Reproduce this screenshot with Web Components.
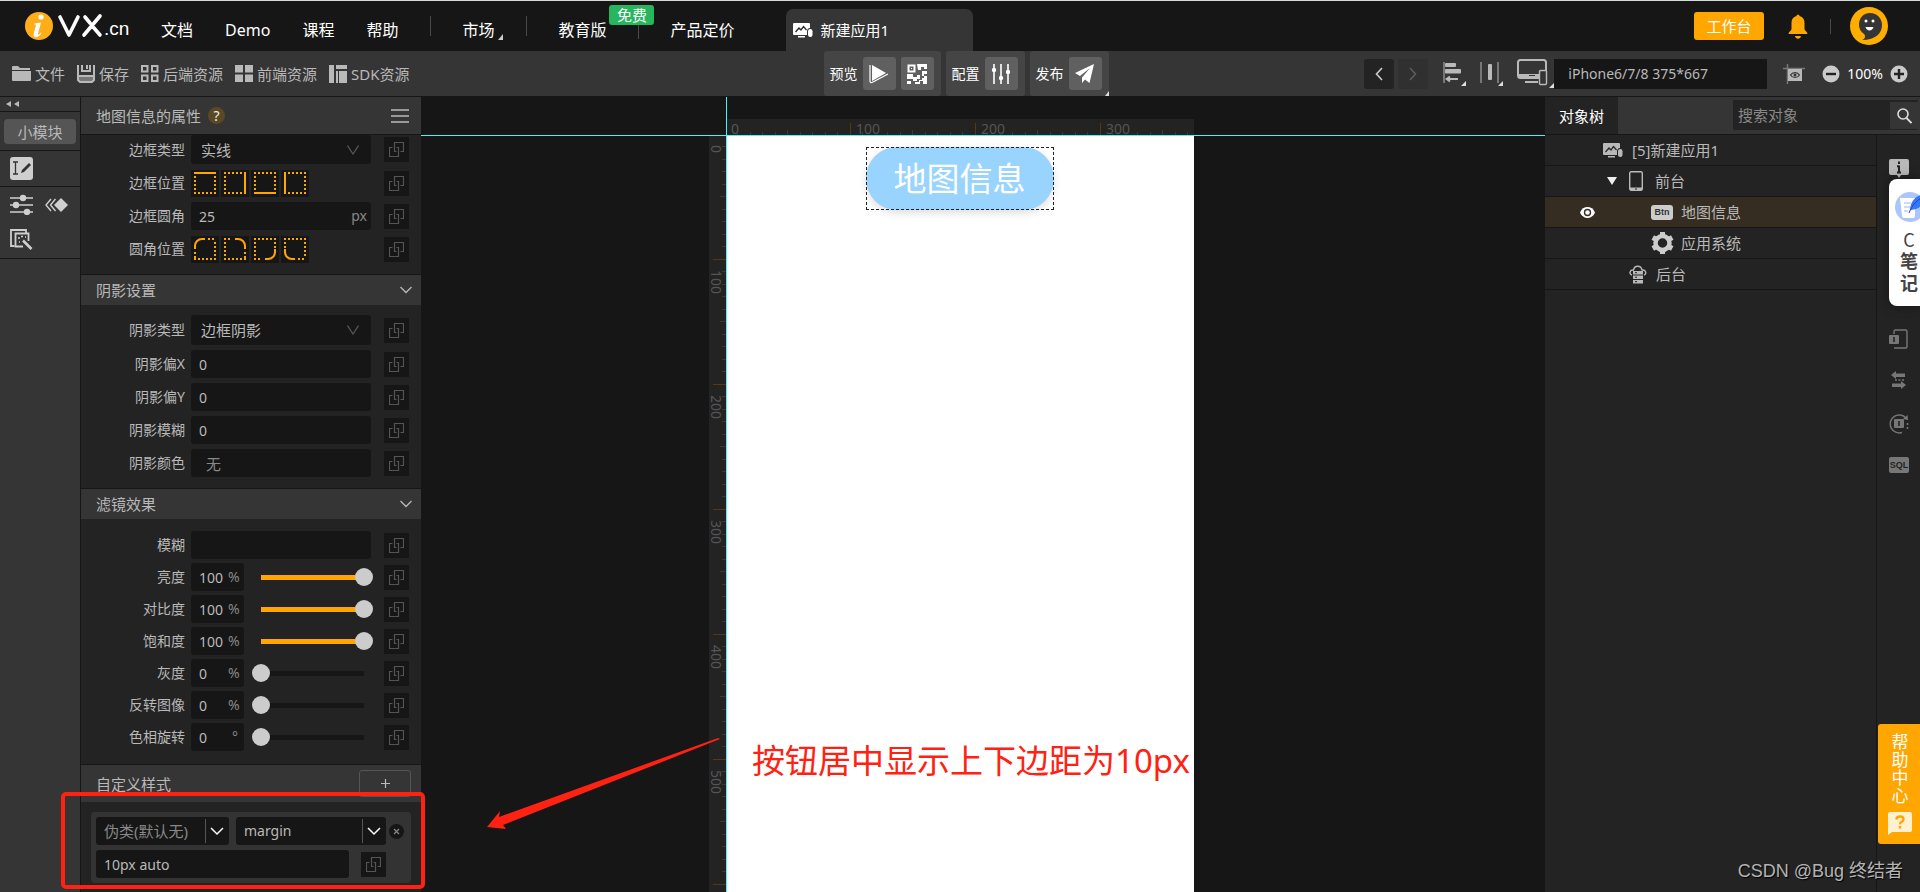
<!DOCTYPE html>
<html lang="zh-CN">
<head>
<meta charset="utf-8">
<title>iVX.cn - 新建应用1</title>
<style>
  html, body { height: 100%; margin: 0; }
  body {
    --ink: #161616; --panel: #232323; --bar: #353535; --text: #b9b9b9; --accent: #ffa600; --guide: #4df3f3; --mark: #ff2213;
    background: var(--ink); color: var(--text);
    font: 15px/20px "Noto Sans", "Noto Sans CJK SC", sans-serif;
  }
</style>
</head>
<body>
<ivx-app></ivx-app>

<script>
const svg = (w, h, body, extra = '') =>
  `<svg width="${w}" height="${h}" viewBox="0 0 ${w} ${h}" fill="none" stroke-width="1" aria-hidden="true" ${extra}>${body}</svg>`;

const dots = 'stroke="#ffa600" stroke-width="2" stroke-dasharray="2 2"';
const bold = 'stroke="#ffa600" stroke-width="2"';

const ICONS = {
  logo: svg(78, 28, `<circle cx="14" cy="14" r="14" fill="#ffae1a"/><circle cx="16" cy="5" r="2.6" fill="#fff"/><path d="M9.500 11.500l6.500-1-3 11.200c-.3 1.400.9 1.200 2.800-1.200l.8.600c-2.200 3.200-4 4.400-6 4.200-2-.2-2.400-1.700-1.900-3.500l2.200-8.300c.2-.9-.2-1-1.600-1z" fill="#fff"/><path d="M35 5l9 18 9-18M60 5l5 6M75 4L59 23M69 16l6 7" stroke="#fff" stroke-width="3.600" stroke-linecap="round" stroke-linejoin="round"/>`),
  app: svg(20, 17, `<path d="M1 1h15a1 1 0 0 1 1 1v4c-2 0-3 1.500-3 3.500V13H1a1 1 0 0 1-1-1V2a1 1 0 0 1 1-1z" fill="currentColor"/><path d="M2.500 10l3.500-4 2 2 2.500-3.500L13.500 8" stroke="#2b2b2b" stroke-width="1.300"/><rect x="15" y="7" width="4.500" height="8" rx="2.200" fill="currentColor"/><path d="M5 14h7v1.500H5z" fill="currentColor"/>`),
  bell: svg(20, 25, `<path d="M8.500 2a1.500 1.500 0 0 1 3 0c3.500 1 5 3.500 5 7v6c0 1.500 3 3 3 5H.500c0-2 3-3.500 3-5V9c0-3.500 1.500-6 5-7zM7 22h6c-.5 3.500-5.500 3.500-6 0z" fill="#ffa600"/>`),
  avatar: svg(38, 38, `<circle cx="19" cy="19" r="19" fill="#ffae00"/><path d="M20 6c7 0 12 5 12 12 0 8-6 15-20 15 3-1 4-4 2-6-3-2-5-5-5-9C9 11 13 6 20 6z" fill="#353535"/><circle cx="16" cy="14" r="1.500" fill="#fff"/><circle cx="23" cy="14" r="1.500" fill="#fff"/><path d="M15.500 20h8c-1 4.500-7 4.500-8 0z" fill="#fff"/>`),
  folder: svg(19, 15, `<path d="M0 1a1 1 0 0 1 1-1h5l2 2h10v2H0zM0 5h19v9a1 1 0 0 1-1 1H1a1 1 0 0 1-1-1z" fill="currentColor"/>`),
  save: svg(18, 18, `<path d="M1 0v15l2 2h12l2-2V0M5 0v6h8V0M10 0v4M1.500 11h15" stroke="currentColor" stroke-width="2"/><path d="M2 12h14v4H2z" fill="currentColor" opacity=".5"/>`),
  grid: svg(18, 17, `<path d="M1 1h5.500v5.500H1zM11 1h5.500v5.500H11zM1 10.500h5.500V16H1zM11 10.500h5.500V16H11z" stroke="currentColor" stroke-width="2"/>`),
  tiles: svg(18, 17, `<path d="M0 0h8v7.500H0zM10 0h8v7.500h-8zM0 9.500h8V17H0zM10 9.500h8V17h-8z" fill="currentColor"/>`),
  sdk: svg(18, 18, `<path d="M0 0h5v18H0zM7 0h11v4H7zM7 6h2v12H7zM10 6h8v12h-8z" fill="currentColor"/>`),
  play: svg(20, 20, `<path d="M3 1l14 8L3 17z" fill="#fff"/><path d="M1 1v16c0 1.500 1 2 2.500 1.200L19 10" stroke="#fff" stroke-width="1.200"/>`),
  qr: svg(20, 20, `<path d="M1.500 1.500h6v6h-6z" stroke="#fff" stroke-width="2"/><path d="M4 4h1v1H4zM10 0h10v5h-3V3h-3v3h-3zM0 10h6v3h4v-2h3v4h-3v2H6v-2H0zM15 7h5v3h-3v2h-2zM17 12h3v8h-4v-3h-3v3H8v-2h4v-2h3v-2h2zM0 17h4v3H0z" fill="#fff"/>`),
  tune: svg(20, 20, `<path d="M3 0v20M10 0v20M17 0v20" stroke="#fff" stroke-width="1.600"/><circle cx="3" cy="6" r="2.200" fill="#fff"/><circle cx="10" cy="14" r="2.200" fill="#fff"/><circle cx="17" cy="8" r="2.200" fill="#fff"/>`),
  plane: svg(20, 20, `<path d="M19 0L0 9l5 3 10-8-8 9.500V19l3-3.500 4.500 3.500z" fill="#fff"/>`),
  left: svg(8, 14, `<path d="M7 1L1.500 7 7 13" stroke="currentColor" stroke-width="1.600"/>`),
  right: svg(8, 14, `<path d="M1 1l5.500 6L1 13" stroke="currentColor" stroke-width="1.600"/>`),
  align: svg(24, 25, `<path d="M1 1v21" stroke="currentColor"/><rect x="2" y="2" width="11" height="4" rx="1" fill="currentColor"/><rect x="2" y="8" width="16" height="4.500" rx="1" fill="currentColor"/><path d="M4 18h11M7 15.500L3.500 18 7 20.500" stroke="currentColor" stroke-width="1.800"/><path d="M23 20v5h-5z" fill="#ddd"/>`),
  spread: svg(24, 25, `<path d="M1 1v21M18 1v21" stroke="currentColor"/><rect x="8" y="3" width="4" height="16" rx="1" fill="currentColor"/><path d="M23 20v5h-5z" fill="#ddd"/>`),
  device: svg(37, 29, `<rect x="1" y="1" width="28" height="18" rx="2.500" stroke="currentColor" stroke-width="2"/><path d="M2 15h20v4H2zM8 22h13v2H8z" fill="currentColor"/><path d="M12 16.500h6" stroke="#333"/><rect x="22.500" y="11.500" width="7" height="14" rx="1" fill="#353535" stroke="currentColor" stroke-width="1.400"/><path d="M37 24v5h-5z" fill="#ddd"/>`),
  shot: svg(24, 20, `<path d="M0 4.500h22M4.500 0v20" stroke="#777" stroke-width="1.500"/><path d="M5 5h14v12H5z" fill="currentColor"/><path d="M7.500 11c2-3.300 7-3.300 9 0-2 3.300-7 3.300-9 0z" stroke="#353535" stroke-width="1.200"/><circle cx="12" cy="11" r="1.500" fill="#353535"/>`),
  minus: svg(18, 18, `<circle cx="9" cy="9" r="8.500" fill="#cacaca"/><path d="M4 9h10" stroke="#222" stroke-width="2.400"/>`),
  plus: svg(18, 18, `<circle cx="9" cy="9" r="8.500" fill="#cacaca"/><path d="M4 9h10M9 4v10" stroke="#222" stroke-width="2.400"/>`),
  rewind: svg(14, 6, `<path d="M5 0v6L0 3zM13 0v6L8 3z" fill="currentColor"/>`),
  edit: svg(23, 23, `<rect width="23" height="23" rx="3" fill="#cfcfcf"/><path d="M3 5h5M5.500 5v12M3 17h5" stroke="#333" stroke-width="1.300"/><path d="M11 16l1-3 7-7 2 2-7 7z" fill="#333"/>`),
  sliders: svg(23, 21, `<path d="M0 4h23M0 11h23M0 18h23" stroke="#cfcfcf" stroke-width="1.600"/><circle cx="13" cy="4" r="3.200" fill="#cfcfcf"/><circle cx="6" cy="11" r="3.200" fill="#cfcfcf"/><circle cx="17" cy="18" r="3.200" fill="#cfcfcf"/>`),
  keyframe: svg(23, 14, `<path d="M6 1L1 7l5 6M10.500 1l-5 6 5 6" stroke="#cfcfcf" stroke-width="1.400"/><path d="M16 0l7 7-7 7-7-7z" fill="#cfcfcf"/>`),
  magic: svg(23, 21, `<path d="M4.500 17H1V1h15v3" stroke="#cfcfcf" stroke-width="1.800"/><path d="M18.500 12V4.500h-13v13H13" stroke="#cfcfcf" stroke-width="1.800"/><path d="M13 11.500l8.500 8.500" stroke="#cfcfcf" stroke-width="2.600"/><path d="M8 9h2M11 7.500h2M9 13h1M15 8h1" stroke="#cfcfcf" stroke-width="1.500"/>`),
  menu: svg(18, 14, `<path d="M0 1h18M0 7h18M0 13h18" stroke="currentColor" stroke-width="1.600"/>`),
  down: svg(12, 8, `<path d="M.500 1L6 6.500 11.500 1" stroke="currentColor" stroke-width="1.300"/>`),
  pick: svg(12, 10, `<path d="M.500.500L6 9 11.500.500" stroke="#555" stroke-width="1.300"/>`),
  caret: svg(14, 9, `<path d="M1 1l6 6 6-6" stroke="#fff" stroke-width="1.500"/>`),
  link: svg(15, 15, `<path d="M3.500 5.500h-3v9h9v-9h-2M7.500 9.500h-2v-9h9v9h-3" stroke="#555" stroke-width="1.200"/>`),
  bTop: svg(22, 22, `<path d="M0 1h22" ${bold}/><path d="M1 4v16M21 4v16M0 21h22" ${dots}/>`),
  bRight: svg(22, 22, `<path d="M21 0v22" ${bold}/><path d="M0 1h18M1 4v16M0 21h18" ${dots}/>`),
  bBottom: svg(22, 22, `<path d="M0 21h22" ${bold}/><path d="M0 1h22M1 4v14M21 4v14" ${dots}/>`),
  bLeft: svg(22, 22, `<path d="M1 0v22" ${bold}/><path d="M4 1h18M21 4v16M4 21h18" ${dots}/>`),
  cTL: svg(22, 22, `<path d="M1 11V8a7 7 0 0 1 7-7h3" ${bold}/><path d="M14 1h8M21 4v16M0 21h22M1 14v6" ${dots}/>`),
  cTR: svg(22, 22, `<path d="M11 1h3a7 7 0 0 1 7 7v3" ${bold}/><path d="M0 1h8M1 4v16M0 21h22M21 14v6" ${dots}/>`),
  cBR: svg(22, 22, `<path d="M21 11v3a7 7 0 0 1-7 7h-3" ${bold}/><path d="M0 1h22M1 4v16M0 21h8M21 4v6" ${dots}/>`),
  cBL: svg(22, 22, `<path d="M1 11v3a7 7 0 0 0 7 7h3" ${bold}/><path d="M0 1h22M21 4v16M14 21h8M1 4v6" ${dots}/>`),
  close: svg(15, 15, `<circle cx="7.500" cy="7.500" r="7.500" fill="#161616"/><path d="M5 5l5 5M10 5l-5 5" stroke="#888" stroke-width="1.200"/>`),
  add: svg(9, 9, `<path d="M0 4.500h9M4.500 0v9" stroke="#bbb" stroke-width="1.200"/>`),
  search: svg(15, 16, `<circle cx="6" cy="6" r="5" stroke="#ddd" stroke-width="1.600"/><path d="M9.500 10l5 5" stroke="#ddd" stroke-width="1.800"/>`),
  fold: svg(10, 8, `<path d="M0 0h10L5 8z" fill="#eee"/>`),
  phone: svg(14, 20, `<rect x=".700" y=".700" width="12.600" height="18.600" rx="1.500" stroke="currentColor" stroke-width="1.400"/><path d="M1 16.500h12v2.500H1z" fill="currentColor"/><path d="M6 18h2" stroke="#222"/>`),
  eye: svg(15, 11, `<path d="M0 5.500C3-1.800 12-1.800 15 5.500 12 12.800 3 12.800 0 5.500z" fill="#fff"/><circle cx="7.500" cy="5.500" r="3" stroke="#352c22" stroke-width="1.400"/>`),
  gear: svg(23, 22, `<path d="M9 2.500h5M9 19.500h5M2.700 8.900l2.500-4.300M2.700 13.100l2.500 4.300M20.300 8.900l-2.500-4.300M20.300 13.100l-2.500 4.300" stroke="#ccc" stroke-width="5"/><circle cx="11.500" cy="11" r="7" stroke="#ccc" stroke-width="4.500"/>`),
  server: svg(18, 19, `<path d="M3 10C-.500 9 1 4.500 4.500 5 5.500 0 12 0 13 5c4-.500 5 4 2 5" stroke="currentColor" stroke-width="1.400"/><path d="M4 6h10v3.500H4zM4 10.500h10V14H4zM4 15h10v3.500H4z" fill="currentColor"/><path d="M6 7.700h2M6 12.200h2M6 16.700h2" stroke="#222"/>`),
  info: svg(20, 20, `<path d="M2 0h16a2 2 0 0 1 2 2v12a2 2 0 0 1-2 2h-6l-2 3-2-3H2a2 2 0 0 1-2-2V2a2 2 0 0 1 2-2z" fill="#b9b9b9"/><path d="M10 2.500v2.500M10 6.500V14M8 7.200h2M8 13.500h4" stroke="#232323" stroke-width="2"/>`),
  panelIn: svg(20, 20, `<path d="M5 5V2.500A1.500 1.500 0 0 1 6.500 1h10A1.500 1.500 0 0 1 18 2.500v15a1.500 1.500 0 0 1-1.500 1.500H5" stroke="#777" stroke-width="1.400"/><rect y="6" width="10" height="9" rx="1" fill="#777"/><path d="M5 8v5" stroke="#232323" stroke-width="1.600"/>`),
  swap: svg(16, 18, `<path d="M0 4l5-4v2.500h9V6H5v2zM15 14l-5-4v2.500H1V16h9v2z" fill="#777"/><path d="M4 9h2M7.500 9h2M11 9h2" stroke="#777" stroke-width="1.600"/>`),
  cycle: svg(20, 20, `<path d="M17 4a9 9 0 1 0-4 14.500" stroke="#777" stroke-width="1.400"/><path d="M14 5l5 1-.500-5z" fill="#777"/><path d="M18.500 9v8" stroke="#777" stroke-width="1.600" stroke-dasharray="2 2"/><rect x="5" y="5" width="10" height="9" rx="1" fill="#777"/><path d="M10 7v5M10 14v2" stroke="#232323" stroke-width="1.600"/>`),
  note: svg(30, 30, `<circle cx="15" cy="15" r="15" fill="#abc6fa"/><path d="M5 6h15v18a2 2 0 0 1-2 2H9a2 2 0 0 1-2-2z" fill="#fff"/><path d="M9 11h7M9 15h6M9 19h4" stroke="#bcd0f5" stroke-width="1.500"/><path d="M15 19C15 9 21 3 30 2c0 9-4 15-14 16z" fill="#2f7bf6"/><path d="M14 21C17 13 22 8 28 5" stroke="#4433d8"/>`),
  ask: svg(24, 23, `<path d="M2 0h20a2 2 0 0 1 2 2v16a2 2 0 0 1-2 2H4l-4 3V2a2 2 0 0 1 2-2z" fill="#fff0cf"/><path d="M8.500 7.500c0-4 7-4 7 0 0 2.500-3.500 2.200-3.500 4.700M12 14v2.500" stroke="#ffa600" stroke-width="2.400"/>`),
};

class Base extends HTMLElement {
  connectedCallback() {
    if (this.shadowRoot) return;
    const t = document.createElement('template');
    t.innerHTML = `<style>*{box-sizing:border-box}svg{display:block;flex:none}button,input,select{font:inherit;color:inherit;margin:0;outline:0}button{border:0;padding:0;background:none;display:flex;align-items:center;justify-content:center}a{color:inherit;text-decoration:none}${this.css()}</style>${this.html()}`;
    this.attachShadow({ mode: 'open' }).append(t.content.cloneNode(true));
  }
  attr(name, fallback = '') { return this.getAttribute(name) ?? fallback; }
}
const define = (name, css, html) => customElements.define(name, class extends Base {
  css() { return typeof css === 'function' ? css(this) : css; }
  html() { return typeof html === 'function' ? html(this) : html; }
});

define('ivx-app', `
  :host{display:flex;flex-direction:column;height:100vh;overflow:hidden;position:relative}
  main{flex:1;display:flex;min-height:0;border-top:1px solid var(--ink)}
  ivx-stage{flex:1;min-width:0}
  .box{position:absolute;left:61px;top:792px;width:364px;height:97px;border:4px solid var(--mark);border-radius:5px}
  .arrow{position:absolute;left:480px;top:730px}
  .mark{position:absolute;right:17px;bottom:8px;font:18px/26px "Liberation Sans","Noto Sans CJK SC",sans-serif;color:#b4b4b4;text-shadow:1px 1px 1px #000}
`, `
  <ivx-header></ivx-header>
  <ivx-toolbar></ivx-toolbar>
  <main>
    <ivx-rail></ivx-rail><ivx-props></ivx-props><ivx-stage></ivx-stage><ivx-tree></ivx-tree>
  </main>
  <div class="box"></div>
  <div class="arrow">${svg(242, 102, '<path d="M7 97L20 81l-1 6L238 8l2 1L23 95l3 4z" fill="#ff2213"/>')}</div>
  <div class="mark">CSDN @Bug 终结者</div>
`);

define('ivx-header', `
  :host{display:flex;align-items:stretch;height:51px;flex:none;border-top:1px solid #d5dbd5;background:var(--ink);color:#fff;font-size:16px}
  .logo{display:flex;align-items:flex-start;padding:11px 0 0 25px;width:161px;gap:1px;font:19px/24px "Liberation Sans",sans-serif}
  .logo span{padding-top:5px}
  nav{display:flex;gap:32px;padding-top:18px}
  nav a{position:relative;height:22px;line-height:22px}
  i{width:1px;height:20px;margin:-3px -1px 0 0;background:#4a4a4a}
  i.low{margin-top:6px;height:14px}
  .more::after{content:"";position:absolute;right:-9px;bottom:1px;border:solid;border-width:0 0 6px 5px;border-color:transparent transparent #ccc}
  b{position:absolute;left:51px;top:-14px;width:45px;height:20px;border-radius:3px;background:#27b55e;font:15px/20px "Noto Sans CJK SC",sans-serif;text-align:center}
  .tab{display:flex;align-items:center;gap:7px;width:187px;margin:8px 0 0 52px;padding:0 7px;border-radius:7px 7px 0 0;background:var(--bar);font-size:15px;justify-content:flex-start}
  .me{display:flex;align-items:center;margin-left:auto;padding-right:32px}
  .work{width:70px;height:28px;border-radius:3px;background:var(--accent);font-size:15px;margin-right:24px}
  .me i{height:15px;margin:0 19px 0 22px}
`, `
  <a class="logo" href="#" aria-label="iVX">${ICONS.logo}<span>.cn</span></a>
  <nav><a href="#">文档</a><a href="#">Demo</a><a href="#">课程</a><a href="#">帮助</a><i></i><a href="#" class="more">市场</a><i></i><a href="#">教育版<b>免费</b></a><i class="low"></i><a href="#">产品定价</a></nav>
  <button class="tab">${ICONS.app}新建应用1</button>
  <div class="me"><button class="work">工作台</button><button aria-label="通知">${ICONS.bell}</button><i></i><button aria-label="账户">${ICONS.avatar}</button></div>
`);

define('ivx-toolbar', `
  :host{display:grid;grid-template-columns:1fr auto 1fr;height:45px;flex:none;padding-left:12px;background:var(--bar)}
  .files,.view{display:flex;align-items:center}
  .files{gap:12px}
  .files button{gap:4px}
  .run{display:flex;gap:5px}
  .grp{position:relative;display:flex;align-items:center;gap:5px;padding:0 7px 0 6px;border-radius:3px;background:#454545;color:#fff;font-size:14px}
  .grp button{width:33px;height:33px;border-radius:3px;background:#606060}
  .grp.more::after{content:"";position:absolute;right:0;bottom:0;border:solid;border-width:0 0 5px 4px;border-color:transparent transparent #ddd}
  .view{justify-content:flex-end;padding-right:12px}
  .nav{width:30px;height:30px;border-radius:3px;background:var(--panel);margin-right:4px;color:#ccc}
  .nav.off{background:#303030;color:#5c5c5c;margin-right:15px}
  .tool{margin-right:13px}
  .dev{margin:0}
  input{width:213px;height:30px;margin-right:16px;padding:0 14px;border:0;background:var(--ink);font-size:14px}
  .zoom{display:flex;align-items:center;gap:7px;margin-left:15px;color:#fff;font-size:14px}
`, `
  <div class="files"><button>${ICONS.folder}文件</button><button>${ICONS.save}保存</button><button>${ICONS.grid}后端资源</button><button>${ICONS.tiles}前端资源</button><button>${ICONS.sdk}SDK资源</button></div>
  <div class="run">
    <div class="grp">预览<button aria-label="播放">${ICONS.play}</button><button aria-label="二维码">${ICONS.qr}</button></div>
    <div class="grp">配置<button aria-label="配置">${ICONS.tune}</button></div>
    <div class="grp more">发布<button aria-label="发布">${ICONS.plane}</button></div>
  </div>
  <div class="view"><button class="nav" aria-label="后退">${ICONS.left}</button><button class="nav off" aria-label="前进">${ICONS.right}</button>
    <button class="tool" aria-label="对齐">${ICONS.align}</button><button class="tool" aria-label="分布">${ICONS.spread}</button><button class="dev" aria-label="设备">${ICONS.device}</button>
    <input value="iPhone6/7/8 375*667" aria-label="设备尺寸">
    <button aria-label="截图">${ICONS.shot}</button>
    <div class="zoom"><button aria-label="缩小">${ICONS.minus}</button>100%<button aria-label="放大">${ICONS.plus}</button></div></div>
`);

define('ivx-rail', `
  :host{width:81px;flex:none;background:var(--bar);border-right:1px solid var(--ink);display:block}
  div{border-bottom:1px solid var(--ink);display:flex}
  .fold{height:15px;padding:4px 6px}
  .mod{height:39px;padding:7px 4px 6px}
  .mod button{flex:1;border-radius:4px;background:#555}
  .one{height:36px;padding:6px 10px}
  .many{height:72px;padding:7px 12px 0 10px;flex-wrap:wrap;justify-content:space-between;align-content:flex-start;align-items:center;row-gap:14px}
`, `
  <div class="fold"><button aria-label="收起">${ICONS.rewind}</button></div>
  <div class="mod"><button>小模块</button></div>
  <div class="one"><button aria-label="编辑">${ICONS.edit}</button></div>
  <div class="many"><button aria-label="属性">${ICONS.sliders}</button><button aria-label="动效">${ICONS.keyframe}</button><button aria-label="样式">${ICONS.magic}</button></div>
`);

define('ivx-link', `:host{display:block}button{width:25px;height:25px;background:var(--ink)}`,
  `<button aria-label="绑定数据">${ICONS.link}</button>`);

/* One property row: label, a control chosen by "kind", and the binding button. */
define('ivx-field', `
  :host{display:grid;grid-template-columns:104px 1fr 25px;align-items:center;column-gap:6px;height:28px;padding-right:12px}
  :host([kind=select]){height:30px}
  label,.name{font-size:14px;text-align:right;white-space:nowrap}
  .ctl{position:relative;display:flex;align-items:center;margin-right:7px;height:100%;min-width:0}
  input,select{border:0;border-radius:3px;background:var(--ink);height:100%}
  select,.text{width:100%}
  select{appearance:none;padding:0 10px}
  .text{padding:0 8px;font-size:14px}
  .color{padding:0 15px;font-size:15px;color:#888}
  .ctl>svg{position:absolute;right:12px;pointer-events:none}
  .px{position:absolute;right:4px;color:#888;font-size:14px}
  .num{width:53px;padding:0 8px;font-size:14px;flex:none}
  .unit{position:absolute;left:37px;color:#888;font-size:14px}
  .deg{left:41px}
  .set{gap:2px}
  .set button{width:28px;height:27px;background:var(--ink)}
  input[type=range]{appearance:none;flex:none;width:121px;height:18px;margin-left:8px;background:none}
  input[type=range]::-webkit-slider-runnable-track{height:18px;background:linear-gradient(var(--track),var(--track)) center/calc(100% - 18px) 5px no-repeat}
  input[type=range]::-webkit-slider-thumb{appearance:none;width:18px;height:18px;border-radius:50%;background:#ccc}
`, el => {
  const kind = el.attr('kind'), label = el.attr('label'), value = el.attr('value'), unit = el.attr('unit');
  const name = kind === 'icons' ? `<span class="name">${label}</span>` : `<label for="c">${label}</label>`;
  const control = {
    select: `<select id="c"><option>${value}</option></select>${ICONS.pick}`,
    text: `<input id="c" class="text" value="${value}">${unit ? `<span class="px">${unit}</span>` : ''}`,
    color: `<input id="c" class="text color" value="${value}">`,
    icons: value.split(' ').map(k => `<button aria-label="${label}">${ICONS[k] || ''}</button>`).join(''),
    range: `<input id="c" class="num" value="${value}"><span class="unit${unit === '%' ? '' : ' deg'}">${unit}</span><input type="range" aria-label="${label}" min="0" max="100" value="${value}" style="--track:${+value ? '#ffa600' : '#161616'}">`,
  }[kind];
  return `${name}<div class="ctl${kind === 'icons' ? ' set' : ''}">${control}</div><ivx-link></ivx-link>`;
});

define('ivx-section', `
  :host{display:block;border-top:1px solid var(--ink)}
  header{display:flex;align-items:center;justify-content:space-between;height:30px;padding:0 9px 0 15px;background:var(--bar)}
  :host([tall]) header{height:37px;padding-right:10px}
  div{display:flex;flex-direction:column;gap:5px;padding:10px 0 11px}
  :host([dense]) div{gap:4px;padding:12px 0 13px}
`, el => `<header>${el.attr('label')}<slot name="action">${ICONS.down}</slot></header><div><slot></slot></div>`);

define('ivx-style-rule', `
  :host{display:grid;gap:5px;margin:0 10px;padding:5px;border-radius:4px;background:#333}
  .row{display:flex;align-items:center;height:28px}
  .pick{position:relative;display:flex;align-items:center;height:28px}
  .pick.a{width:133px;margin-right:7px;color:#888}
  .pick.b{width:150px;margin-right:3px;font-size:14px}
  select,input{width:100%;height:100%;appearance:none;border:0;border-radius:3px;background:var(--ink);padding:0 8px}
  .pick svg{position:absolute;right:5px;pointer-events:none}
  .pick::after{content:"";position:absolute;right:23px;top:2px;bottom:2px;width:1px;background:#555}
  input{width:253px;font-size:14px;margin-right:12px}
`, `
  <div class="row"><span class="pick a"><select aria-label="伪类"><option>伪类(默认无)</option></select>${ICONS.caret}</span><span class="pick b"><select aria-label="样式名"><option>margin</option></select>${ICONS.caret}</span><button aria-label="删除">${ICONS.close}</button></div>
  <div class="row"><input aria-label="样式值" value="10px auto"><ivx-link></ivx-link></div>
`);

define('ivx-props', `
  :host{display:block;width:340px;flex:none;background:var(--panel);overflow:hidden}
  h2{display:flex;align-items:center;gap:7px;height:37px;margin:0;padding:0 12px 0 15px;background:var(--bar);font:inherit}
  h2 .q{width:17px;height:17px;border-radius:50%;background:#5b4824;color:#eee;font-size:14px;line-height:17px}
  h2 .m{margin-left:auto}
  .top{display:flex;flex-direction:column;gap:5px;height:140px;border-top:1px solid var(--ink)}
  .top :first-child{height:29px}
  .add{width:52px;height:27px;border:1px solid #555;border-radius:3px}
`, `
  <h2>地图信息的属性<button class="q">?</button><button class="m" aria-label="菜单">${ICONS.menu}</button></h2>
  <div class="top">
    <ivx-field kind="select" label="边框类型" value="实线"></ivx-field>
    <ivx-field kind="icons" label="边框位置" value="bTop bRight bBottom bLeft"></ivx-field>
    <ivx-field kind="text" label="边框圆角" value="25" unit="px"></ivx-field>
    <ivx-field kind="icons" label="圆角位置" value="cTL cTR cBR cBL"></ivx-field>
  </div>
  <ivx-section label="阴影设置">
    <ivx-field kind="select" label="阴影类型" value="边框阴影"></ivx-field>
    <ivx-field kind="text" label="阴影偏X" value="0"></ivx-field>
    <ivx-field kind="text" label="阴影偏Y" value="0"></ivx-field>
    <ivx-field kind="text" label="阴影模糊" value="0"></ivx-field>
    <ivx-field kind="color" label="阴影颜色" value="无"></ivx-field>
  </ivx-section>
  <ivx-section label="滤镜效果" dense>
    <ivx-field kind="text" label="模糊" value=""></ivx-field>
    <ivx-field kind="range" label="亮度" value="100" unit="%"></ivx-field>
    <ivx-field kind="range" label="对比度" value="100" unit="%"></ivx-field>
    <ivx-field kind="range" label="饱和度" value="100" unit="%"></ivx-field>
    <ivx-field kind="range" label="灰度" value="0" unit="%"></ivx-field>
    <ivx-field kind="range" label="反转图像" value="0" unit="%"></ivx-field>
    <ivx-field kind="range" label="色相旋转" value="0" unit="°"></ivx-field>
  </ivx-section>
  <ivx-section label="自定义样式" tall><button class="add" slot="action" aria-label="添加">${ICONS.add}</button><ivx-style-rule></ivx-style-rule></ivx-section>
`);

/* Ruler: a tick each 10 units; 100 units span 125 pixels. */
const ruler = vertical => {
  const length = vertical ? 780 : 468, parts = [];
  for (let i = 0; i * 12.5 <= length; i++) {
    const p = Math.floor(i * 12.5), major = i % 10 === 0, size = major ? 13 : i % 5 === 0 ? 6 : 4;
    if (i) parts.push(vertical
      ? `<path d="M17 ${p - 1.5}h-${size}" stroke="${major ? '#523b14' : '#3a3a3a'}"/>`
      : `<path d="M${p - 1.5} 17v-${size}" stroke="${major ? '#523b14' : '#3a3a3a'}"/>`);
    if (major && p < 740) parts.push(vertical
      ? `<text transform="translate(2 ${p + 9}) rotate(90)">${i * 10}</text>`
      : `<text x="${p + 4}" y="15">${i * 10}</text>`);
  }
  return svg(vertical ? 17 : length, vertical ? length : 17, parts.join(''));
};

define('ivx-stage', `
  :host{position:relative;display:flex;justify-content:center;padding:22px 63px 0 0;background:var(--ink);overflow:hidden}
  .view{position:relative;display:grid;grid-template:17px 1fr / 18px 467px}
  .x,.y{background:var(--panel)}
  .x svg,.y svg{overflow:visible}
  .x{grid-column:2}
  text{fill:#555;font-size:14px}
  .page{background:#fff;position:relative;display:flex;flex-direction:column;align-items:center;padding-right:2px}
  .page button{margin:11px 0 0;width:188px;height:63px;position:relative;border-radius:31px;background:#99d4ff;color:#fff;font-size:33px;box-shadow:0 3px 8px #0002}
  .page button::after{content:"";position:absolute;inset:0;border:1px dashed #222}
  .page p{position:absolute;left:25px;top:603px;margin:0;color:var(--mark);font-size:33px;line-height:44px;white-space:nowrap}
  .h,.v{position:absolute;background:var(--guide)}
  .h{left:0;right:0;top:38px;height:1px}
  .v{left:17px;top:-22px;bottom:0;width:1px}
`, `
  <div class="view"><div class="x">${ruler(false)}</div><div class="y">${ruler(true)}</div>
    <div class="page"><button>地图信息</button><p>按钮居中显示上下边距为10px</p></div><div class="v"></div></div>
  <div class="h"></div>
`);

define('ivx-node', `
  :host{display:flex;align-items:center;gap:9px;height:31px;border-bottom:1px solid var(--ink);padding-left:58px;position:relative}
  :host([level="1"]){padding-left:62px}
  :host([level="2"]){padding-left:106px;gap:7px}
  :host([open]){gap:12px}
  :host([root]){padding-left:84px;gap:9px}
  :host([active]){background:#352c22;gap:8px}
  .eye{position:absolute;left:35px}
  .tag{width:22px;height:15px;border-radius:3px;background:#ccc;color:#333;font:bold 9px/15px "Liberation Sans",sans-serif;text-align:center}
`, el => {
  const icon = el.attr('icon');
  return `${el.hasAttribute('active') ? `<button class="eye" aria-label="可见">${ICONS.eye}</button>` : ''}${el.hasAttribute('open') ? ICONS.fold : ''}${icon === 'btn' ? '<span class="tag">Btn</span>' : ICONS[icon]}<slot></slot>`;
});

define('ivx-tree', `
  :host{display:flex;flex-direction:column;width:375px;flex:none;background:var(--panel)}
  header{display:flex;height:38px;flex:none;background:var(--bar);border-bottom:1px solid var(--ink)}
  .tab{width:73px;background:var(--panel);color:#fff}
  .find{display:flex;margin:3px 2px 4px auto;width:185px;background:var(--panel)}
  input{flex:1;min-width:0;border:0;background:none;padding:0 5px}
  input::placeholder{color:#888}
  .find button{width:28px;margin:2px 0 1px;background:var(--bar)}
  .body{flex:1;display:flex;min-height:0}
  .list{flex:1;border-right:1px solid var(--ink)}
  .side{position:relative;width:43px;display:flex;flex-direction:column;align-items:flex-start;padding:24px 0 0 12px}
  .side .s1{margin-top:150px}
  .side .s2{margin:22px 0 0 2px}
  .side .s3{margin-top:25px}
  .sql{width:20px;height:16px;margin-top:23px;border-radius:2px;background:#777;color:#232323;font:bold 9px/16px "Liberation Sans",sans-serif}
  .note{position:absolute;right:0;top:44px;width:31px;height:127px;border-radius:8px 0 0 8px;background:#fff;color:#444;overflow:hidden;display:flex;flex-direction:column;align-items:flex-start;padding:13px 0 0 6px;box-shadow:0 0 12px #0006}
  .note span{width:28px;text-align:center;font:700 18px/22px "Noto Sans CJK SC",sans-serif}
  .note .c{font-weight:400;margin-top:7px;line-height:20px}
  .help{position:absolute;right:0;top:589px;width:42px;height:120px;border-radius:3px 0 0 3px;background:var(--accent);color:#fff;display:flex;flex-direction:column;align-items:center;padding-top:9px;gap:7px}
  .help span{width:17px;margin-left:2px;font-size:17px;line-height:18px}
  .help svg{margin-right:-2px}
`, `
  <header><button class="tab">对象树</button><div class="find"><input placeholder="搜索对象" aria-label="搜索对象"><button aria-label="搜索">${ICONS.search}</button></div></header>
  <div class="body"><div class="list">
    <ivx-node icon="app">[5]新建应用1</ivx-node>
    <ivx-node icon="phone" level="1" open>前台</ivx-node>
    <ivx-node icon="btn" level="2" active>地图信息</ivx-node>
    <ivx-node icon="gear" level="2">应用系统</ivx-node>
    <ivx-node icon="server" root>后台</ivx-node>
  </div>
  <div class="side"><button aria-label="信息">${ICONS.info}</button><button class="s1" aria-label="面板">${ICONS.panelIn}</button><button class="s2" aria-label="交换">${ICONS.swap}</button><button class="s3" aria-label="刷新">${ICONS.cycle}</button><button class="sql">SQL</button>
    <a class="note" href="#">${ICONS.note}<span class="c">C</span><span>笔</span><span>记</span></a>
    <a class="help" href="#"><span>帮助中心</span>${ICONS.ask}</a></div></div>
`);
</script>
</body>
</html>
